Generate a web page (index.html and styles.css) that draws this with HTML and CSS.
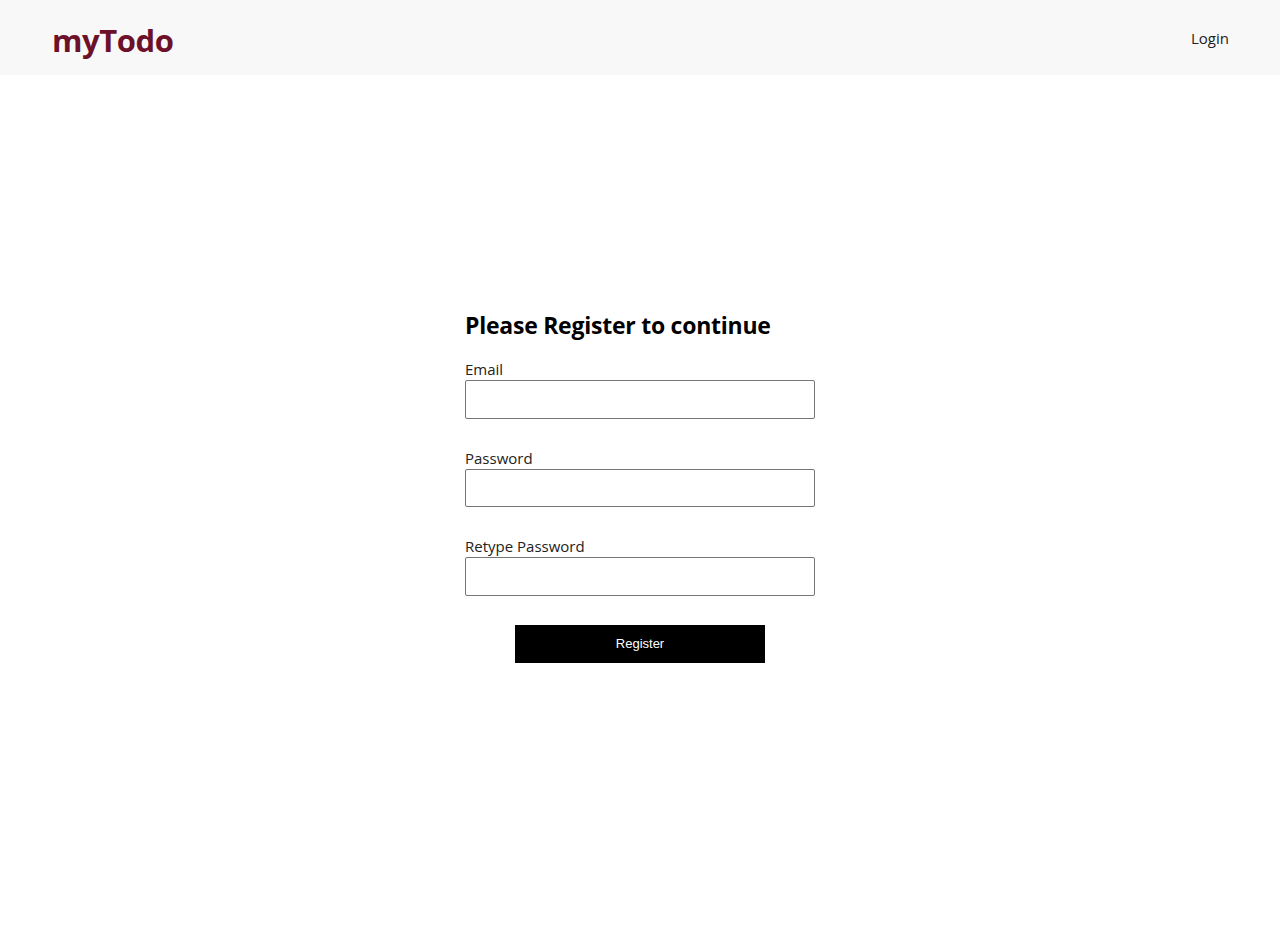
FILE: index.html
```html
<!DOCTYPE html>
<html lang="en">
<head>
<meta charset="utf-8">
<title>myTodo - Register</title>
<link rel="stylesheet" href="styles.css">
</head>
<body>
<header class="topbar">
  <div class="logo">myTodo</div>
  <nav class="nav"><a class="nav-link" href="#">Login</a></nav>
</header>
<main class="main">
  <form class="form">
    <h2 class="form-title">Please Register to continue</h2>
    <div class="field">
      <label class="label" for="email">Email</label>
      <input class="input" id="email" type="email">
    </div>
    <div class="field">
      <label class="label" for="pw">Password</label>
      <input class="input" id="pw" type="password">
    </div>
    <div class="field">
      <label class="label" for="pw2">Retype Password</label>
      <input class="input" id="pw2" type="password">
    </div>
    <div class="actions">
      <button class="btn" type="button">Register</button>
    </div>
  </form>
</main>
</body>
</html>
```
FILE: styles.css
```css
* { box-sizing: border-box; }
html, body { margin: 0; padding: 0; }
body {
  font-family: "Open Sans", "Noto Sans", sans-serif;
  color: #111;
  background: #fff;
}
.topbar {
  height: 75px;
  background: #f8f8f8;
  display: flex;
  align-items: center;
  justify-content: space-between;
  padding: 0 51px 0 52px;
}
.logo {
  font-family: "Open Sans", sans-serif;
  font-weight: 700;
  font-size: 31px;
  letter-spacing: -0.4px;
  color: #6c1129;
  margin-top: 4px;
}
.nav-link {
  font-size: 15px;
  color: #222;
  text-decoration: none;
}
.main {
  padding-top: 234px;
}
.form {
  width: 350px;
  margin: 0 auto;
}
.form-title {
  margin: 0 0 18px;
  font-size: 23px;
  line-height: 32px;
  font-weight: 700;
  color: #000;
  letter-spacing: -0.25px;
}
.field {
  display: flex;
  flex-direction: column;
  margin-bottom: 29px;
}
.label {
  font-size: 15px;
  line-height: 21px;
  color: #222;
}
.input {
  height: 38.5px;
  width: 100%;
  border: 1px solid #767676;
  border-radius: 2px;
  padding: 0 4px;
  font-size: 15px;
}
.actions {
  display: flex;
  justify-content: center;
}
.btn {
  width: 250px;
  height: 38px;
  background: #000;
  color: #fff;
  border: none;
  font-family: "Liberation Sans", Arial, sans-serif;
  font-size: 13px;
}
```
